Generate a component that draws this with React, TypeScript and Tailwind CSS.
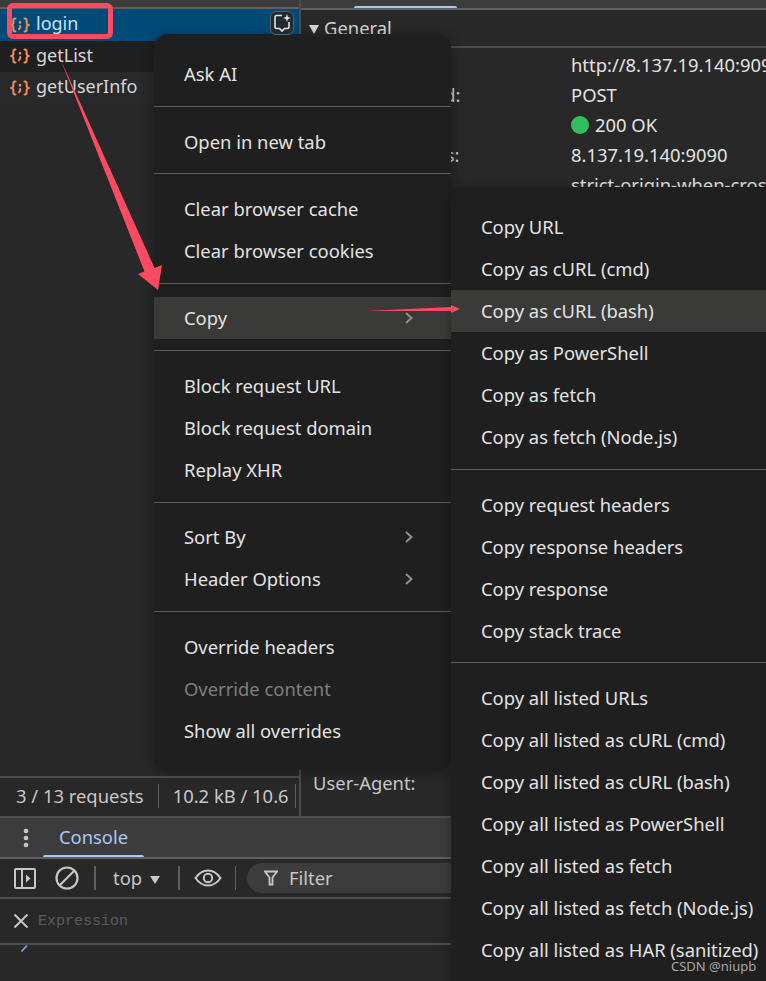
import React from "react";

type Item = { label: string; arrow?: boolean; active?: boolean; disabled?: boolean };

const mainMenu: Item[][] = [
  [{ label: "Ask AI" }],
  [{ label: "Open in new tab" }],
  [{ label: "Clear browser cache" }, { label: "Clear browser cookies" }],
  [{ label: "Copy", arrow: true, active: true }],
  [{ label: "Block request URL" }, { label: "Block request domain" }, { label: "Replay XHR" }],
  [{ label: "Sort By", arrow: true }, { label: "Header Options", arrow: true }],
  [{ label: "Override headers" }, { label: "Override content", disabled: true }, { label: "Show all overrides" }],
];

const copyMenu: Item[][] = [
  [
    { label: "Copy URL" },
    { label: "Copy as cURL (cmd)" },
    { label: "Copy as cURL (bash)", active: true },
    { label: "Copy as PowerShell" },
    { label: "Copy as fetch" },
    { label: "Copy as fetch (Node.js)" },
  ],
  [
    { label: "Copy request headers" },
    { label: "Copy response headers" },
    { label: "Copy response" },
    { label: "Copy stack trace" },
  ],
  [
    { label: "Copy all listed URLs" },
    { label: "Copy all listed as cURL (cmd)" },
    { label: "Copy all listed as cURL (bash)" },
    { label: "Copy all listed as PowerShell" },
    { label: "Copy all listed as fetch" },
    { label: "Copy all listed as fetch (Node.js)" },
    { label: "Copy all listed as HAR (sanitized)" },
  ],
];

const XhrIcon = () => (
  <svg width="20" height="16" viewBox="0 0 20 16" fill="none" stroke="#f28b54" strokeWidth="2" strokeLinecap="round">
    <path d="M5.5 1.5H5C3.8 1.5 3.4 2.2 3.4 3.2V5.8C3.4 6.9 2.8 7.6 1.6 8C2.8 8.4 3.4 9.1 3.4 10.2V12.8C3.4 13.8 3.8 14.5 5 14.5H5.5" />
    <path d="M14.5 1.5H15C16.2 1.5 16.6 2.2 16.6 3.2V5.8C16.6 6.9 17.2 7.6 18.4 8C17.2 8.4 16.6 9.1 16.6 10.2V12.8C16.6 13.8 16.2 14.5 15 14.5H14.5" />
    <path d="M10 5V5.6" strokeWidth="2.4" />
    <path d="M10.2 9V10.4L9 12.2" />
  </svg>
);

const Chevron = () => (
  <svg width="10" height="14" viewBox="0 0 10 14" fill="none" stroke="#8f8f8f" strokeWidth="2">
    <path d="M3 2L8.5 7L3 12" />
  </svg>
);

const Menu = ({ groups, className }: { groups: Item[][]; className: string }) => (
  <div className={`absolute bg-[#1f1f1f] rounded-[14px] overflow-hidden shadow-[0_2px_12px_rgba(0,0,0,0.35)] pt-[19px] ${className}`}>
    {groups.map((group, i) => (
      <div key={i} className={i > 0 ? "border-t border-[#5a5a5a] mt-[11px] pt-[13.4px]" : ""}>
        {group.map((item) => (
          <div
            key={item.label}
            className={`h-[42px] pl-[30px] pr-[38px] flex items-center justify-between whitespace-nowrap ${
              item.active ? "bg-[#3a3a39]" : ""
            } ${item.disabled ? "text-[#7e7e7e]" : "text-[#e3e3e3]"}`}
          >
            <span>{item.label}</span>
            {item.arrow && <Chevron />}
          </div>
        ))}
      </div>
    ))}
  </div>
);

const Row = ({ name, bg, text }: { name: string; bg: string; text: string }) => (
  <div className={`h-[31.5px] pl-[10px] flex items-center gap-[6px] ${bg} ${text}`}>
    <XhrIcon />
    <span className="-mt-[2px] text-[18px]">{name}</span>
  </div>
);

const Header = ({ label, value, dot }: { label: string; value: string; dot?: boolean }) => (
  <div className="h-[30px] flex items-center whitespace-nowrap">
    <span className="w-[258px] shrink-0 text-[#c7c7c7]">{label}</span>
    {dot && <span className="w-[18px] h-[18px] rounded-full bg-[#34bd5c] mr-[6px] shrink-0" />}
    <span className="text-[#e3e3e3]">{value}</span>
  </div>
);

const VSep = ({ className }: { className: string }) => <div className={`w-[2px] h-[24px] bg-[#5f5f5f] ${className}`} />;

export default function App() {
  return (
    <div
      className="relative w-[766px] h-[981px] overflow-hidden bg-[#282828] text-[18.4px] flex flex-col"
      style={{ fontFamily: '"Noto Sans", "Open Sans", sans-serif' }}
    >
      {/* network panel */}
      <div className="h-[818px] shrink-0 flex border-b-2 border-[#4d4d4d]">
        <div className="w-[301px] shrink-0 border-r-2 border-[#4d4d4d] flex flex-col">
          <div className="h-[9px] bg-[#3c3c3c] border-b-2 border-[#5f5f5f]" />
          <Row name="login" bg="bg-[#004a77]" text="text-[#c2e7ff]" />
          <Row name="getList" bg="bg-[#1f1f1f]" text="text-[#d6d6d6]" />
          <Row name="getUserInfo" bg="bg-[#28292a]" text="text-[#d6d6d6]" />
          <div className="flex-1" />
          <div className="h-[40px] border-t-2 border-[#4d4d4d] flex items-center pl-[16px] pb-[2px] text-[#c7c7c7] whitespace-nowrap overflow-hidden">
            <span>3 / 13 requests</span>
            <div className="w-px h-[24px] bg-[#5f5f5f] mx-[14px]" />
            <span>10.2 kB / 10.6</span>
            <div className="w-px h-[24px] bg-[#5f5f5f] ml-[6px]" />
          </div>
        </div>
        <div className="flex-1 flex flex-col min-w-0">
          <div className="h-[10px] bg-[#3c3c3c] border-b-2 border-[#5f5f5f] pl-[53px]">
            <div className="w-[103px] h-[2px] mt-[6px] bg-[#a8c7fa] rounded-t" />
          </div>
          <div className="h-[38px] border-b-2 border-[#4d4d4d] flex items-center pl-[8px] gap-[5px] text-[#d6d6d6]">
            <span className="w-0 h-0 border-x-[5px] border-x-transparent border-t-[9px] border-t-[#d6d6d6] mt-[2px]" />
            <span>General</span>
          </div>
          <div className="pl-[12px] pt-[2px]">
            <Header label="Request URL:" value="http://8.137.19.140:9090/user/login" />
            <Header label="Request Method:" value="POST" />
            <Header label="Status Code:" value="200 OK" dot />
            <Header label="Remote Address:" value="8.137.19.140:9090" />
            <Header label="Referrer Policy:" value="strict-origin-when-cross-origin" />
          </div>
          <div className="flex-1" />
          <div className="h-[30px] mb-[18px] pl-[12px] text-[#c7c7c7] flex items-center">User-Agent:</div>
        </div>
      </div>

      {/* console drawer */}
      <div className="h-[41px] shrink-0 bg-[#3c3c3c] border-b-2 border-[#5f5f5f] flex items-stretch">
        <div className="w-[43px] flex items-center justify-center pl-[8px]">
          <svg width="6" height="20" viewBox="0 0 6 20" fill="#c7c7c7">
            <circle cx="3" cy="3" r="2.3" />
            <circle cx="3" cy="10" r="2.3" />
            <circle cx="3" cy="17" r="2.3" />
          </svg>
        </div>
        <div className="w-[101px] flex flex-col items-center">
          <span className="flex-1 flex items-center text-[#a8c7fa] pt-[1px]">Console</span>
          <div className="h-[2px] w-full bg-[#a8c7fa] rounded-t" />
        </div>
      </div>
      <div className="h-[40px] shrink-0 border-b-2 border-[#4d4d4d] flex items-center text-[#c7c7c7] whitespace-nowrap">
        <svg className="ml-[14px]" width="22" height="21" viewBox="0 0 22 21" fill="none" stroke="#c7c7c7" strokeWidth="2">
          <rect x="1" y="1" width="20" height="19" rx="1" />
          <path d="M8 1V20" />
          <path d="M12 6.5L16.5 10.5L12 14.5Z" fill="#c7c7c7" stroke="none" />
        </svg>
        <svg className="ml-[19px]" width="24" height="24" viewBox="0 0 24 24" fill="none" stroke="#c7c7c7" strokeWidth="2.2">
          <circle cx="12" cy="12" r="10.5" />
          <path d="M19.5 4.5L4.5 19.5" />
        </svg>
        <VSep className="ml-[15px]" />
        <span className="ml-[17px]">top</span>
        <span className="ml-[8px] w-0 h-0 border-x-[5px] border-x-transparent border-t-[8px] border-t-[#c7c7c7] mt-[3px]" />
        <VSep className="ml-[18px]" />
        <svg className="ml-[14px]" width="28" height="18" viewBox="0 0 28 18" fill="none" stroke="#c7c7c7" strokeWidth="2">
          <path d="M1.5 9C5 4 9 1.5 14 1.5C19 1.5 23 4 26.5 9C23 14 19 16.5 14 16.5C9 16.5 5 14 1.5 9Z" />
          <circle cx="14" cy="9" r="4.2" />
        </svg>
        <div className="w-px h-[24px] bg-[#5f5f5f] ml-[13px]" />
        <div className="ml-[11px] flex-1 h-[30px] bg-[#3c3c3c] rounded-l-full flex items-center pl-[17px]">
          <svg width="14" height="16" viewBox="0 0 14 16" fill="none" stroke="#c7c7c7" strokeWidth="1.8">
            <path d="M1 1.5H13L8.5 7.5V14.5H5.5V7.5Z" />
          </svg>
          <span className="ml-[11px]">Filter</span>
        </div>
      </div>
      <div className="h-[46px] shrink-0 border-b-2 border-[#4d4d4d] flex items-center pl-[13px]">
        <svg width="16" height="16" viewBox="0 0 16 16" fill="none" stroke="#c7c7c7" strokeWidth="2">
          <path d="M1.5 1.5L14.5 14.5M14.5 1.5L1.5 14.5" />
        </svg>
        <span className="ml-[9px] mt-[2px] text-[15px] text-[#5c5c5c]" style={{ fontFamily: '"Liberation Mono", monospace' }}>
          Expression
        </span>
      </div>
      <div className="pl-[20px]">
        <svg width="8" height="8" viewBox="0 0 8 8" fill="none" stroke="#7cacf8" strokeWidth="1.6">
          <path d="M7 0.5L1.5 6.5" />
        </svg>
      </div>

      {/* context menus */}
      <Menu groups={mainMenu} className="left-[154px] top-[34px] w-[297px] h-[736px]" />
      <Menu groups={copyMenu} className="left-[451px] top-[187px] w-[340px] h-[820px]" />

      {/* AI button on the selected row */}
      <div className="absolute left-[270px] top-[11px] w-[24px] h-[24px] rounded-[6px] border border-[#5f6368] bg-[#1f2a33] flex items-center justify-center">
        <svg width="18" height="20" viewBox="0 0 18 20" fill="none" stroke="#e3e3e3" strokeWidth="1.6">
          <path d="M9 2.5H3.5C2.5 2.5 2 3 2 4V14C2 15 2.5 15.5 3.5 15.5H6.5L9 18L11.5 15.5H14.5C15.5 15.5 16 15 16 14V9" />
          <path d="M14 1L15 4L18 5L15 6L14 9L13 6L10 5L13 4Z" fill="#e3e3e3" stroke="none" />
        </svg>
      </div>

      {/* annotations */}
      <div className="absolute left-[7px] top-[3px] w-[106px] h-[36px] rounded-[6px] border-[5px] border-[#fd4a63]" />
      <svg className="absolute left-0 top-0 pointer-events-none" width="766" height="981" viewBox="0 0 766 981">
        <polygon points="60,58 154.5,268 162,265 158,290 138,274 144.5,271.5" fill="#fd4a63" />
        <polygon points="367,311 451,307 451,305 460,309 451,313 451,311" fill="#fd4a63" />
      </svg>
      <div className="absolute left-[671px] top-[957px] text-[13px] text-[#a6a6a6] whitespace-nowrap">CSDN @niupb</div>
    </div>
  );
}
